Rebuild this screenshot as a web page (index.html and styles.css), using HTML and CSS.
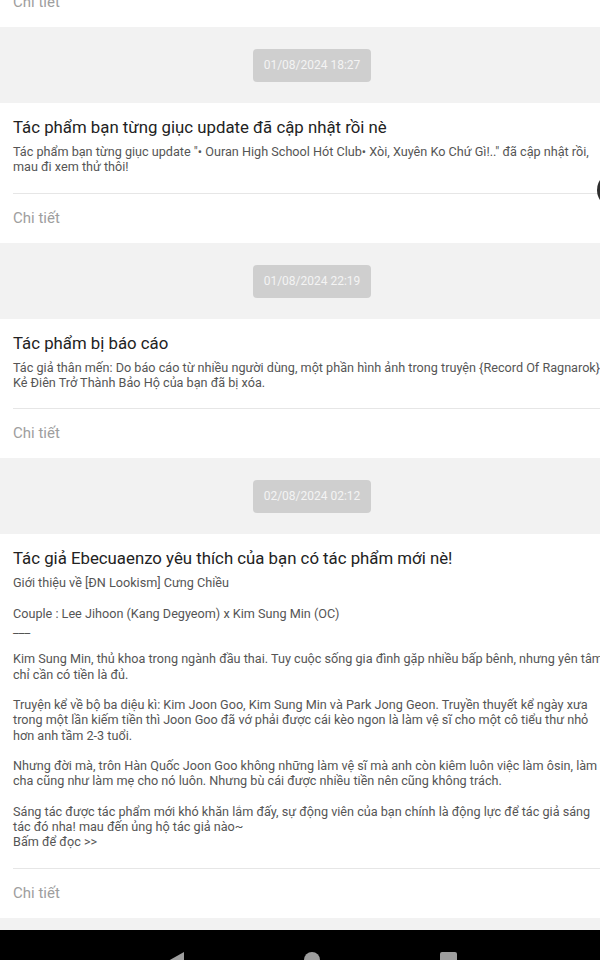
FILE: index.html
```html
<!DOCTYPE html>
<html>
<head>
<meta charset="utf-8" />
<title>Thông báo</title>
<link rel="stylesheet" href="styles.css">
</head>
<body>
<div class="screen">
  <div class="feed">
    <div class="card">
      <div class="card-foot">Chi tiết</div>
    </div>

    <div class="stamp"><span>01/08/2024 18:27</span></div>
    <div class="card">
      <div class="card-title">Tác phẩm bạn từng giục update đã cập nhật rồi nè</div>
      <div class="card-text">Tác phẩm bạn từng giục update "• Ouran High School Hót Club• Xòi, Xuyên Ko Chứ Gì!.." đã cập nhật rồi,
mau đi xem thử thôi!</div>
      <div class="card-foot">Chi tiết</div>
      <span class="fab"></span>
    </div>

    <div class="stamp"><span>01/08/2024 22:19</span></div>
    <div class="card">
      <div class="card-title">Tác phẩm bị báo cáo</div>
      <div class="card-text">Tác giả thân mến: Do báo cáo từ nhiều người dùng, một phần hình ảnh trong truyện {Record Of Ragnarok}
Kẻ Điên Trở Thành Bảo Hộ của bạn đã bị xóa.</div>
      <div class="card-foot">Chi tiết</div>
    </div>

    <div class="stamp"><span>02/08/2024 02:12</span></div>
    <div class="card">
      <div class="card-title">Tác giả Ebecuaenzo yêu thích của bạn có tác phẩm mới nè!</div>
      <div class="card-text">Giới thiệu về [ĐN Lookism] Cưng Chiều

Couple : Lee Jihoon (Kang Degyeom) x Kim Sung Min (OC)
___

Kim Sung Min, thủ khoa trong ngành đầu thai. Tuy cuộc sống gia đình gặp nhiều bấp bênh, nhưng yên tâm
chỉ cần có tiền là đủ.

Truyện kể về bộ ba diệu kì: Kim Joon Goo, Kim Sung Min và Park Jong Geon. Truyền thuyết kể ngày xưa
trong một lần kiếm tiền thì Joon Goo đã vớ phải được cái kèo ngon là làm vệ sĩ cho một cô tiểu thư nhỏ
hơn anh tầm 2-3 tuổi.

Nhưng đời mà, trôn Hàn Quốc Joon Goo không những làm vệ sĩ mà anh còn kiêm luôn việc làm ôsin, làm
cha cũng như làm mẹ cho nó luôn. Nhưng bù cái được nhiều tiền nên cũng không trách.

Sáng tác được tác phẩm mới khó khăn lắm đấy, sự động viên của bạn chính là động lực để tác giả sáng
tác đó nha! mau đến ủng hộ tác giả nào~
Bấm để đọc &gt;&gt;</div>
      <div class="card-foot">Chi tiết</div>
    </div>
  </div>

  <div class="navbar">
    <div class="nav-btn">
      <svg width="16" height="18" viewBox="0 0 16 18"><polygon points="16,0 16,18 0,9" fill="#9e9e9e"/></svg>
    </div>
    <div class="nav-btn">
      <svg width="16" height="16" viewBox="0 0 16 16"><circle cx="8" cy="8" r="8" fill="#9e9e9e"/></svg>
    </div>
    <div class="nav-btn">
      <svg width="17" height="17" viewBox="0 0 17 17"><rect x="0" y="0" width="17" height="17" rx="2" fill="#9e9e9e"/></svg>
    </div>
  </div>
</div>
</body>
</html>
```

FILE: styles.css
```css
html, body {
  margin: 0;
  padding: 0;
  overflow: hidden;
  background: #f2f2f2;
}
.screen {
  width: 624px;
  font-family: Roboto, "Noto Sans", sans-serif;
}
.feed {
  margin-top: -23px;
  padding-bottom: 12px;
}
.card {
  position: relative;
  background: #fff;
  padding-top: 14px;
}
.card-title {
  margin: 0 13px;
  font-size: 16.8px;
  line-height: 20px;
  color: #222;
}
.card-text {
  margin: 7px 13px 0;
  padding-bottom: 18px;
  font-size: 12.65px;
  line-height: 15.25px;
  color: #555;
  white-space: pre;
}
.card-foot {
  margin-left: 13px;
  height: 49px;
  line-height: 49px;
  border-top: 1px solid #e6e6e6;
  font-size: 15px;
  color: #9e9e9e;
}
.card:first-child {
  padding-top: 0;
}
.card:first-child .card-foot {
  border-top-color: transparent;
}
.stamp {
  padding: 22px 0 21px;
  text-align: center;
}
.stamp span {
  display: inline-block;
  height: 33px;
  line-height: 33px;
  padding: 0 11px;
  border-radius: 4px;
  background: #cfcfcf;
  color: #f4f4f4;
  font-size: 12px;
}
.fab {
  position: absolute;
  left: 597px;
  top: 69px;
  width: 36px;
  height: 36px;
  border-radius: 50%;
  background: #2e2e2e;
}
.navbar {
  display: flex;
  justify-content: center;
  height: 60px;
  padding-top: 22px;
  box-sizing: border-box;
  background: #000;
}
.nav-btn {
  width: 136px;
  display: flex;
  justify-content: center;
  align-items: flex-start;
}
```
